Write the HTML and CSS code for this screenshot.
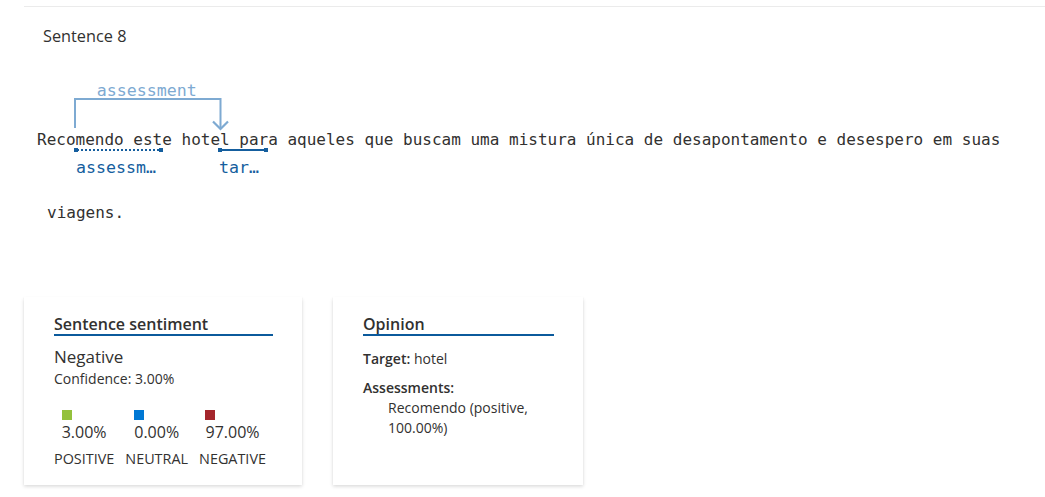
FILE: index.html
```html
<!DOCTYPE html>
<html lang="pt">
<head>
<meta charset="utf-8">
<title>Sentence 8</title>
<link rel="stylesheet" href="styles.css">
</head>
<body>
<section class="sentence-section">
  <h2 class="sentence-title">Sentence 8</h2>
  <div class="sentence">
    <div class="sentence-text">
      <div class="sentence-line sentence-line-first">Recomendo este hotel para aqueles que buscam uma mistura única de desapontamento e desespero em suas</div>
      <div class="sentence-line">viagens.</div>
    </div>
    <svg class="annotations" width="1021" height="120" viewBox="0 0 1021 120" aria-hidden="true">
      <g class="arc">
        <text class="arc-label" x="122.7" y="-7" text-anchor="middle">assessment</text>
        <polyline points="51,25 51,-4 196.5,-4 196.5,26" fill="none" stroke="#7eaad2" stroke-width="2"/>
        <polyline points="189,18.5 196.5,26 204,18.5" fill="none" stroke="#7eaad2" stroke-width="2.2"/>
      </g>
      <g class="span">
        <line x1="53" y1="47" x2="136" y2="47" stroke="#155e9e" stroke-width="2" stroke-dasharray="2 2"/>
        <rect x="50" y="45" width="4" height="4" fill="#155e9e"/>
        <rect x="135" y="45" width="4" height="4" fill="#155e9e"/>
        <text class="span-label" x="52" y="70">assessm…</text>
      </g>
      <g class="span">
        <line x1="196" y1="47" x2="241" y2="47" stroke="#155e9e" stroke-width="2"/>
        <rect x="194" y="45" width="4" height="4" fill="#155e9e"/>
        <rect x="240" y="45" width="4" height="4" fill="#155e9e"/>
        <text class="span-label" x="195" y="70">tar…</text>
      </g>
    </svg>
  </div>
  <div class="cards">
    <div class="card">
      <h3 class="card-title">Sentence sentiment</h3>
      <div class="sentiment-label">Negative</div>
      <div class="confidence">Confidence: 3.00%</div>
      <div class="scores">
        <div class="score">
          <div class="score-top">
            <span class="swatch swatch-positive"></span>
            <span class="score-value">3.00%</span>
          </div>
          <span class="score-name">POSITIVE</span>
        </div>
        <div class="score">
          <div class="score-top">
            <span class="swatch swatch-neutral"></span>
            <span class="score-value">0.00%</span>
          </div>
          <span class="score-name">NEUTRAL</span>
        </div>
        <div class="score">
          <div class="score-top">
            <span class="swatch swatch-negative"></span>
            <span class="score-value">97.00%</span>
          </div>
          <span class="score-name">NEGATIVE</span>
        </div>
      </div>
    </div>
    <div class="card card-opinion">
      <h3 class="card-title">Opinion</h3>
      <div class="target"><strong>Target:</strong> hotel</div>
      <div class="assess-title"><strong>Assessments:</strong></div>
      <ul class="assess-list">
        <li>Recomendo (positive, 100.00%)</li>
      </ul>
    </div>
  </div>
</section>
</body>
</html>
```

FILE: styles.css
```css
html, body {
  margin: 0;
  padding: 0;
  background: #ffffff;
}

body {
  font-family: "Segoe UI", "Open Sans", sans-serif;
  color: #323130;
  padding-bottom: 12px;
}

.sentence-section {
  margin: 6px 0 0 24px;
  border-top: 1px solid #ebebeb;
}

.sentence-title {
  margin: 0;
  padding: 19px 0 0 19px;
  font-size: 16.3px;
  line-height: 20px;
  font-weight: 400;
  color: #323130;
}

.sentence {
  position: relative;
  margin-top: 57px;
}

.sentence-text {
  padding-top: 26.5px;
  font-family: "DejaVu Sans Mono", "Liberation Mono", monospace;
  font-size: 16px;
  line-height: 20px;
  color: #323130;
}

.sentence-line {
  padding-left: 23px;
  margin-top: 53px;
  white-space: nowrap;
}

.sentence-line-first {
  padding-left: 13px;
  margin-top: 0;
}

.annotations {
  position: absolute;
  left: 0;
  top: 0;
  overflow: visible;
  pointer-events: none;
}

.arc-label {
  font-family: "DejaVu Sans Mono", "Liberation Mono", monospace;
  font-size: 16.6px;
  fill: #7eaad2;
}

.span-label {
  font-family: "DejaVu Sans Mono", "Liberation Mono", monospace;
  font-size: 16.6px;
  fill: #155e9e;
}

.cards {
  display: flex;
  gap: 31px;
  margin-top: 74.5px;
}

.card {
  box-sizing: border-box;
  width: 278px;
  height: 188px;
  padding: 18px 29px 16px 30px;
  background: #ffffff;
  box-shadow: 0 1.6px 3.6px 0 rgba(0, 0, 0, 0.16), 0 0.3px 1px 0 rgba(0, 0, 0, 0.12);
}

.card-opinion {
  width: 250px;
}

.card-title {
  margin: 0;
  font-size: 16px;
  line-height: 19px;
  font-weight: 600;
  color: #323130;
  border-bottom: 2px solid #0b5a9c;
}

.sentiment-label {
  margin-top: 10px;
  font-size: 17px;
  line-height: 22px;
}

.confidence {
  margin-top: 2px;
  font-size: 14px;
  line-height: 18px;
}

.scores {
  display: flex;
  gap: 11px;
  margin-top: 22px;
}

.score {
  display: flex;
  flex-direction: column;
  align-items: center;
}

.score-top {
  display: flex;
  flex-direction: column;
  align-items: flex-start;
}

.swatch {
  display: block;
  width: 10px;
  height: 10px;
}

.swatch-positive { background: #94c13c; }
.swatch-neutral { background: #0078d4; }
.swatch-negative { background: #a4262c; }

.score-value {
  font-size: 16px;
  line-height: 24px;
}

.score-name {
  margin-top: 6px;
  font-size: 14.4px;
  line-height: 18px;
}

.target {
  margin-top: 14px;
  font-size: 14px;
  line-height: 18px;
}

.assess-title {
  margin-top: 11px;
  font-size: 14px;
  line-height: 18px;
}

.target strong,
.assess-title strong {
  font-weight: 600;
}

.assess-list {
  margin: 1px 0 0 0;
  padding: 0 0 0 25px;
  list-style: none;
  font-size: 14px;
  line-height: 20px;
}
```
